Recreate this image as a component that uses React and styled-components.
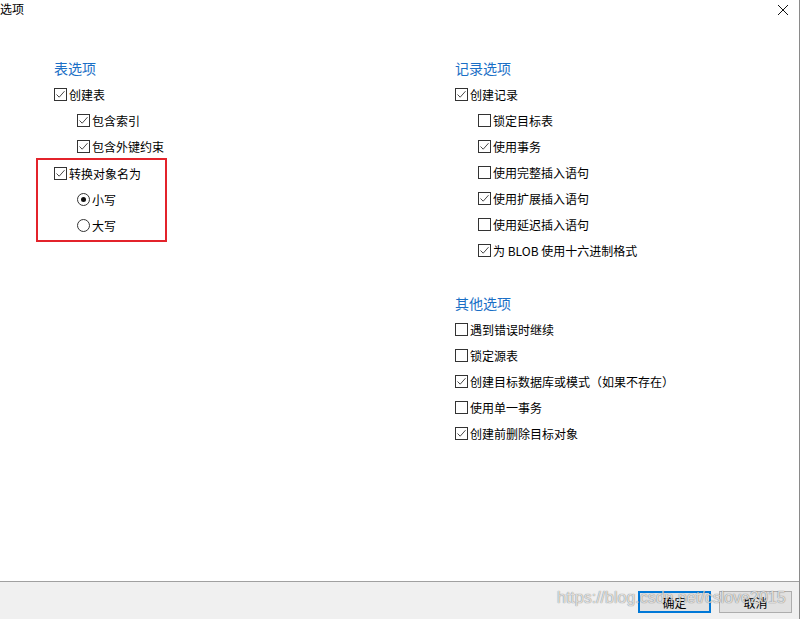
import styled, { createGlobalStyle } from 'styled-components'

const vars = {
    text: '#000000',
    heading: '#1a6fc6',
    boxBorder: '#333333',
    footerBg: '#f0f0f0',
    sep: '#a0a0a0',
    accent: '#0078d7',
    red: '#e3232b',
}

const GlobalStyle = createGlobalStyle`
    html, body {
        margin: 0;
        padding: 0;
        background: #ffffff;
    }
    body {
        font-family: 'Noto Sans CJK SC', 'Noto Sans', sans-serif;
        font-size: 12px;
        color: ${vars.text};
    }
`

const Window = styled.div`
    position: relative;
    width: 799px;
    height: 619px;
    border-right: 1px solid #8a8a8a;
    display: flex;
    flex-direction: column;
    box-sizing: content-box;
    background: #ffffff;
`

const TitleBar = styled.div`
    height: 20px;
    display: flex;
    align-items: flex-start;
    justify-content: space-between;
    padding-right: 10px;
`

const Title = styled.div`
    font-size: 12px;
    line-height: 18px;
`

const Close = styled.div`
    width: 12px;
    height: 12px;
    margin-top: 4px;
    display: flex;
`

const Body = styled.div`
    flex: 1;
    display: flex;
    padding-top: 35px;
`

const Column = styled.div`
    width: ${(p) => p.$width || 'auto'};
    padding-left: ${(p) => p.$pad || '0'};
    box-sizing: border-box;
    display: flex;
    flex-direction: column;
`

const Heading = styled.div`
    height: 26px;
    line-height: 26px;
    font-size: 14px;
    color: ${vars.heading};
    margin-top: ${(p) => (p.$gap ? '27px' : '0')};
`

const Row = styled.label`
    height: 26px;
    display: flex;
    align-items: center;
    gap: 2px;
    padding-left: ${(p) => (p.$indent ? '23px' : '0')};
    white-space: nowrap;
`

const Box = styled.span`
    width: 13px;
    height: 13px;
    border: 1px solid ${vars.boxBorder};
    box-sizing: border-box;
    background: #fff;
    display: flex;
    align-items: center;
    justify-content: center;
    flex-shrink: 0;
`

const Radio = styled(Box)`
    border-radius: 50%;
`

const Dot = styled.span`
    width: 5px;
    height: 5px;
    border-radius: 50%;
    background: #111;
`

const Highlight = styled.div`
    margin-left: -18px;
    width: 131px;
    height: 84px;
    margin-top: -1px;
    border: 2px solid ${vars.red};
    box-sizing: border-box;
    padding: 0 0 0 16px;
`

const Footer = styled.div`
    position: relative;
    height: 38px;
    box-sizing: border-box;
    flex-shrink: 0;
    border-top: 1px solid ${vars.sep};
    background: ${vars.footerBg};
    display: flex;
    justify-content: flex-end;
    align-items: flex-start;
    gap: 8px;
    padding: 9px 7px 0 0;
`

const Button = styled.div`
    width: 73px;
    height: 22px;
    box-sizing: border-box;
    border: ${(p) => (p.$primary ? `2px solid ${vars.accent}` : '1px solid #adadad')};
    background: #e1e1e1;
    display: flex;
    align-items: center;
    justify-content: center;
    font-size: 12px;
`

const Watermark = styled.div`
    position: absolute;
    left: 557px;
    top: 7px;
    font-family: 'Liberation Sans', Arial, sans-serif;
    font-size: 16px;
    color: rgba(255, 255, 255, 0.75);
    text-shadow:
        0 0 1px rgba(0, 0, 0, 0.35),
        0 0 1px rgba(0, 0, 0, 0.35);
    pointer-events: none;
    white-space: nowrap;
`

function Check({ checked, label, indent }) {
    return (
        <Row $indent={indent}>
            <Box>
                {checked && (
                    <svg width="11" height="11" viewBox="0 0 11 11">
                        <path d="M1.5 5.5 L4.2 8.2 L9.5 2.2" fill="none" stroke="#4a4a4a" strokeWidth="1" />
                    </svg>
                )}
            </Box>
            <span>{label}</span>
        </Row>
    )
}

function RadioItem({ checked, label }) {
    return (
        <Row $indent>
            <Radio>{checked && <Dot />}</Radio>
            <span>{label}</span>
        </Row>
    )
}

const records = [
    ['锁定目标表', false],
    ['使用事务', true],
    ['使用完整插入语句', false],
    ['使用扩展插入语句', true],
    ['使用延迟插入语句', false],
    ['为 BLOB 使用十六进制格式', true],
]

const others = [
    ['遇到错误时继续', false],
    ['锁定源表', false],
    ['创建目标数据库或模式（如果不存在）', true],
    ['使用单一事务', false],
    ['创建前删除目标对象', true],
]

export default function App() {
    return (
        <>
            <GlobalStyle />
            <Window>
                <TitleBar>
                    <Title>选项</Title>
                    <Close>
                        <svg width="12" height="12" viewBox="0 0 12 12">
                            <path d="M1 1 L11 11 M11 1 L1 11" stroke="#111" strokeWidth="1" />
                        </svg>
                    </Close>
                </TitleBar>
                <Body>
                    <Column $width="455px" $pad="54px">
                        <Heading>表选项</Heading>
                        <Check checked label="创建表" />
                        <Check checked indent label="包含索引" />
                        <Check checked indent label="包含外键约束" />
                        <Highlight>
                            <Check checked label="转换对象名为" />
                            <RadioItem checked label="小写" />
                            <RadioItem label="大写" />
                        </Highlight>
                    </Column>
                    <Column>
                        <Heading>记录选项</Heading>
                        <Check checked label="创建记录" />
                        {records.map(([label, checked]) => (
                            <Check key={label} indent checked={checked} label={label} />
                        ))}
                        <Heading $gap>其他选项</Heading>
                        {others.map(([label, checked]) => (
                            <Check key={label} checked={checked} label={label} />
                        ))}
                    </Column>
                </Body>
                <Footer>
                    <Button $primary>确定</Button>
                    <Button>取消</Button>
                    <Watermark>https://blog.csdn.net/cslove2015</Watermark>
                </Footer>
            </Window>
        </>
    )
}
